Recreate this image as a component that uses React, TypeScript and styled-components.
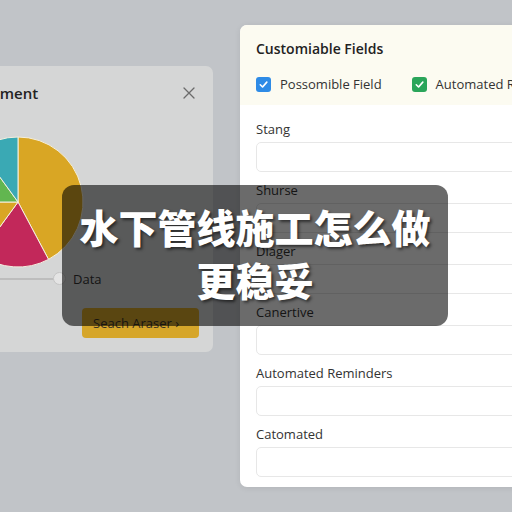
import styled, { createGlobalStyle } from "styled-components";
////////////////////////////////////////////////////////////////////////////////

const GlobalStyle = createGlobalStyle`
  html, body {
    margin: 0;
    padding: 0;
    background: #c1c4c8;
    font-family: "Open Sans", "Liberation Sans", sans-serif;
  }
`;

type Slice = { from: number; to: number; color: string };

const slices: Slice[] = [
  { from: 0, to: 152, color: "#d9a624" },
  { from: 152, to: 216, color: "#c2285a" },
  { from: 216, to: 270, color: "#d9a624" },
  { from: 270, to: 324, color: "#62b650" },
  { from: 324, to: 360, color: "#3aa9b4" },
];

const fields = [
  "Stang",
  "Shurse",
  "Diager",
  "Canertive",
  "Automated Reminders",
  "Catomated",
];

function arc(cx: number, cy: number, r: number, a0: number, a1: number) {
  const p = (a: number) => {
    const rad = ((a - 90) * Math.PI) / 180;
    return [cx + r * Math.cos(rad), cy + r * Math.sin(rad)];
  };
  const [x0, y0] = p(a0);
  const [x1, y1] = p(a1);
  const large = a1 - a0 > 180 ? 1 : 0;
  return `M${cx} ${cy} L${x0} ${y0} A${r} ${r} 0 ${large} 1 ${x1} ${y1} Z`;
}

function PieChart() {
  return (
    <Pie width="140" height="140" viewBox="0 0 140 140">
      {slices.map((s, i) => (
        <path
          key={i}
          d={arc(70, 70, 65, s.from, s.to)}
          fill={s.color}
          stroke="#f4f0e0"
          strokeWidth="1"
        />
      ))}
    </Pie>
  );
}

function Check() {
  return (
    <svg width="11" height="11" viewBox="0 0 12 12">
      <path
        d="M2.5 6.3 L5 8.7 L9.6 3.4"
        fill="none"
        stroke="#fff"
        strokeWidth="1.8"
        strokeLinecap="round"
        strokeLinejoin="round"
      />
    </svg>
  );
}

export default function App() {
  return (
    <>
      <GlobalStyle />
      <Desktop>
        <ChartCard>
          <CardHeader>
            <CardTitle>Management</CardTitle>
            <svg width="14" height="14" viewBox="0 0 14 14">
              <path
                d="M2 2 L12 12 M12 2 L2 12"
                stroke="#6b6b6b"
                strokeWidth="1.3"
                strokeLinecap="round"
              />
            </svg>
          </CardHeader>
          <PieChart />
          <SliderRow>
            <Track>
              <Knob />
            </Track>
            <SliderLabel>Data</SliderLabel>
          </SliderRow>
          <SearchButton>Seach Araser &rsaquo;</SearchButton>
        </ChartCard>

        <FieldsCard>
          <FieldsHeader>
            <FieldsTitle>Customiable Fields</FieldsTitle>
            <CheckRow>
              <CheckItem>
                <Box $color="#2e8be6">
                  <Check />
                </Box>
                Possomible Field
              </CheckItem>
              <CheckItem>
                <Box $color="#2aa55a">
                  <Check />
                </Box>
                Automated Reminders
              </CheckItem>
            </CheckRow>
          </FieldsHeader>
          <FieldsBody>
            {fields.map((f) => (
              <Field key={f}>
                <Label>{f}</Label>
                <Input />
              </Field>
            ))}
          </FieldsBody>
        </FieldsCard>

        <Banner>
          <BannerLine>水下管线施工怎么做</BannerLine>
          <BannerLine>更稳妥</BannerLine>
        </Banner>
      </Desktop>
    </>
  );
}

const Desktop = styled.div`
  position: relative;
  width: 512px;
  height: 512px;
  overflow: hidden;
  background: #c1c4c8;
`;

const ChartCard = styled.div`
  position: absolute;
  left: -74px;
  top: 66px;
  width: 287px;
  height: 286px;
  box-sizing: border-box;
  padding: 16px 17px 0 16px;
  background: #d5d6d6;
  border-radius: 7px;
  display: flex;
  flex-direction: column;
`;

const CardHeader = styled.div`
  display: flex;
  align-items: center;
  justify-content: space-between;
  height: 22px;
`;

const CardTitle = styled.div`
  font-size: 15px;
  font-weight: 600;
  color: #222;
`;

const Pie = styled.svg`
  display: block;
  margin: 28px 0 0 6px;
`;

const SliderRow = styled.div`
  display: flex;
  align-items: center;
  height: 18px;
  margin-top: -2px;
`;

const Track = styled.div`
  position: relative;
  width: 112px;
  height: 2px;
  background: #bdbdbd;
`;

const Knob = styled.div`
  position: absolute;
  right: -12px;
  top: -6px;
  width: 11px;
  height: 11px;
  border-radius: 50%;
  border: 1px solid #c4c4c4;
  background: #e4e4e4;
`;

const SliderLabel = styled.div`
  margin-left: 19px;
  font-size: 13px;
  color: #333;
`;

const SearchButton = styled.div`
  margin: 20px 0 0 140px;
  width: 117px;
  height: 30px;
  box-sizing: border-box;
  padding-left: 11px;
  display: flex;
  align-items: center;
  background: #d6a62a;
  border-radius: 4px;
  font-size: 13px;
  color: #3a3426;
`;

const FieldsCard = styled.div`
  position: absolute;
  left: 240px;
  top: 25px;
  width: 300px;
  height: 462px;
  background: #fff;
  border-radius: 7px;
  overflow: hidden;
  box-shadow: 0 1px 6px rgba(0, 0, 0, 0.08);
`;

const FieldsHeader = styled.div`
  background: #fcfbf1;
  padding: 15px 16px 12px;
`;

const FieldsTitle = styled.div`
  font-size: 14px;
  font-weight: 600;
  line-height: 18px;
  color: #222;
`;

const CheckRow = styled.div`
  display: flex;
  gap: 30px;
  margin-top: 17px;
  height: 18px;
  align-items: center;
  white-space: nowrap;
`;

const CheckItem = styled.div`
  display: flex;
  align-items: center;
  gap: 9px;
  font-size: 13px;
  color: #333;
`;

const Box = styled.div<{ $color: string }>`
  width: 15px;
  height: 15px;
  border-radius: 3px;
  background: ${(p) => p.$color};
  display: flex;
  align-items: center;
  justify-content: center;
`;

const FieldsBody = styled.div`
  padding: 16px 16px 0;
  display: flex;
  flex-direction: column;
  gap: 10px;
`;

const Field = styled.div`
  display: flex;
  flex-direction: column;
  gap: 5px;
`;

const Label = styled.div`
  font-size: 13px;
  line-height: 16px;
  color: #333;
`;

const Input = styled.div`
  height: 30px;
  box-sizing: border-box;
  border: 1px solid #e7e7e7;
  border-radius: 5px;
  background: #fff;
`;

const Banner = styled.div`
  position: absolute;
  left: 62px;
  top: 185px;
  width: 386px;
  height: 141px;
  box-sizing: border-box;
  padding-top: 15px;
  border-radius: 12px;
  background: rgba(0, 0, 0, 0.58);
  display: flex;
  flex-direction: column;
  align-items: center;
`;

const BannerLine = styled.div`
  font-family: "Noto Sans CJK SC", "Noto Sans", sans-serif;
  font-size: 39px;
  font-weight: 900;
  line-height: 53px;
  color: #fff;
  text-shadow: 2px 2px 3px rgba(0, 0, 0, 0.55);
  white-space: nowrap;
`;
